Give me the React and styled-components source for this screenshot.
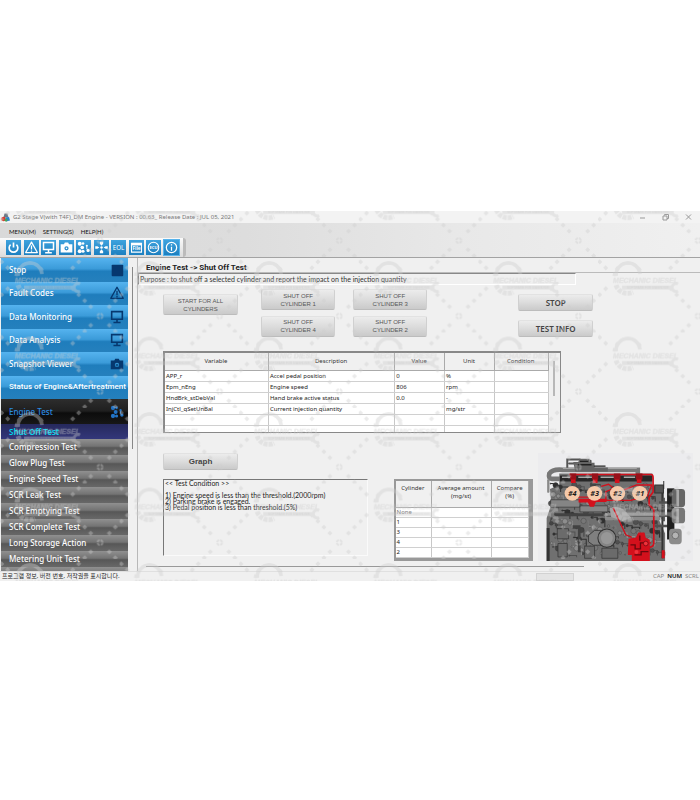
import styled, { createGlobalStyle, css } from 'styled-components';

const GlobalStyle = createGlobalStyle`
  * { box-sizing: border-box; }
  body {
    margin: 0;
    background: #fff;
    font-family: "Noto Sans", "Noto Sans CJK KR", sans-serif;
    font-size: 7px;
    color: #333;
  }
  button { font: inherit; margin: 0; cursor: pointer; }
`;

/* ---------- window ---------- */

const Page = styled.div`
  padding: 211px 0 220px;
`;

const AppWindow = styled.div`
  position: relative;
  overflow: hidden;
  background: #f0f0f0;
`;

const TitleBar = styled.header`
  display: flex;
  align-items: center;
  justify-content: space-between;
  height: 12px;
  padding: 0 8px 0 1px;
  background: #f3f3f3;
`;

const AppTitle = styled.h1`
  display: flex;
  align-items: center;
  gap: 3px;
  margin: 0;
  font-size: 6px;
  line-height: 10px;
  font-weight: 400;
  color: #777;
`;

const WindowButtons = styled.div`
  display: flex;
  gap: 16px;
`;

const WindowButton = styled.button`
  display: flex;
  width: 7px;
  height: 8px;
  padding: 0;
  border: 0;
  background: none;
  color: #999;
`;

const MenuArea = styled.div`
  height: 35px;
  padding-top: 3px;
  border-bottom: 1px solid #a3a3a3;
  background: linear-gradient(90deg, #d9d9d9, #dddddd 35%, #e8e8e8 65%, #f0f0f0);
`;

const MenuBar = styled.nav`
  display: flex;
  gap: 7px;
  height: 12px;
  padding-left: 9px;
`;

const MenuItem = styled.button`
  padding: 0;
  border: 0;
  background: none;
  font: 6px/12px Lato, sans-serif;
  color: #111;
`;

const ToolBar = styled.div`
  display: flex;
  align-items: center;
  width: 186px;
  height: 19px;
  padding: 0 3px 0 5px;
  border-right: 3px solid #bbb;
  border-radius: 0 3px 3px 0;
  background: linear-gradient(#fafafa, #dcdcdc);
`;

const ToolSlot = styled.div`
  display: flex;
  flex: 1;
  justify-content: center;
`;

const ToolButton = styled.button`
  width: 15px;
  height: 15px;
  padding: 0;
  border: 0;
  outline: ${({ $active }) => ($active ? '1px solid #58b4ec' : 'none')};
  background: linear-gradient(#3fa3de, #1c7fc0);
  color: #fff;
  svg { display: block; width: 15px; height: 15px; }
`;

const Body = styled.div`
  display: flex;
  height: 313px;
`;

/* ---------- sidebar ---------- */

const Sidebar = styled.nav`
  flex: none;
  width: 128px;
  padding-left: 1px;
  overflow: hidden;
`;

const MainMenu = styled.div`
  display: grid;
  grid-template-columns: minmax(0, 1fr);
  grid-template-rows: repeat(6, 1fr);
  height: 141px;
`;

const looks = {
  blue: css`
    background: linear-gradient(#55b3ef, #3b9bd9 45%, #1f7dbc 55%, #2580bd);
    color: #fff;
  `,
  dark: css`
    height: 25px;
    background: linear-gradient(#2d2d2d, #1f1f1f 48%, #0c0c0c 56%, #171717);
    color: #2b8be0;
    svg { color: #2273c4; }
  `,
  selected: css`
    height: 15px;
    background: linear-gradient(#26295c, #33377a);
    color: #00d7ee;
    font-weight: 600;
  `,
  grey: css`
    height: 16px;
    background: linear-gradient(#909090, #737373 45%, #575757 55%, #686868);
    color: #fff;
  `,
};

const SideButton = styled.button`
  display: flex;
  align-items: center;
  justify-content: space-between;
  width: 100%;
  padding: 0 1px 0 8px;
  border: 0;
  text-align: left;
  font-family: ${({ $narrow }) => ($narrow ? 'Roboto' : '"Noto Sans"')}, sans-serif;
  font-size: 8px;
  line-height: 12px;
  font-weight: 500;
  white-space: nowrap;
  svg { flex: none; display: block; width: 16px; height: 16px; margin-right: 2px; color: #06386f; }
  ${({ $look }) => looks[$look]}
`;

const SideScroll = styled.div`
  flex: none;
  width: 10px;
  padding: 9px 4px 0;
  border-right: 1px solid #b8b8b8;
  &::before {
    content: '';
    display: block;
    width: 1px;
    height: 182px;
    background: #888;
  }
`;

/* ---------- main panel ---------- */

const Main = styled.main`
  display: flex;
  flex: 1;
  flex-direction: column;
  min-width: 0;
`;

const PanelTitle = styled.h2`
  height: 15px;
  margin: 0;
  padding: 4px 0 0 8px;
  border-bottom: 1px solid #bbb;
  font: bold 8px/11px Roboto, sans-serif;
  color: #222;
`;

const Purpose = styled.p`
  width: 78%;
  height: 12px;
  margin: 0;
  padding-left: 1px;
  border: solid;
  border-width: 1px;
  border-color: #888 #fff #fff #888;
  font: 7px/10px Lato, sans-serif;
  white-space: nowrap;
`;

const Controls = styled.section`
  display: grid;
  grid-template-columns: 75fr 234fr 75fr;
  width: 81%;
  column-gap: 23px;
  padding: 4px 0 0 25px;
`;

const Stack = styled.div`
  display: flex;
  flex-direction: column;
  gap: 9px;
  padding-top: 5px;
`;

const CylinderButtons = styled.div`
  display: grid;
  grid-template-columns: 1fr 1fr;
  gap: 5px 18px;
  padding-right: 29%;
`;

const Button = styled.button`
  height: ${({ $tall }) => ($tall ? '21px' : '17px')};
  width: ${({ $width }) => $width || '100%'};
  padding: 0;
  border: 1px solid;
  border-color: #e2e2e2 #d0d0d0 #bcbcbc;
  border-radius: 2px;
  background: linear-gradient(#ececec, #dcdcdc 50%, #cacaca);
  font-size: ${({ $tall }) => ($tall ? '6px' : '8px')};
  line-height: ${({ $tall }) => ($tall ? '8px' : '12px')};
  font-family: ${({ $noto }) => ($noto ? '"Noto Sans"' : '"Liberation Sans"')}, sans-serif;
  font-weight: ${({ $bold }) => ($bold ? 600 : 400)};
  white-space: pre-line;
  color: ${({ $tall }) => ($tall ? '#555' : '#444')};
`;

const Content = styled.div`
  display: flex;
  flex-direction: column;
  padding: 14px 7px 0 25px;
`;

const VariableBox = styled.div`
  display: flex;
  align-items: flex-start;
  width: 75%;
  height: 82px;
  overflow: hidden;
  border: solid #888;
  border-width: 2px 1px 1px 2px;
`;

const ScrollTrack = styled.div`
  flex: none;
  width: 11px;
  padding: 8px 4px;
  &::before {
    content: '';
    display: block;
    width: 2px;
    height: 35px;
    background: #b8b8b8;
  }
`;

const Table = styled.table`
  flex: 1;
  width: 100%;
  table-layout: fixed;
  border-collapse: collapse;
  th, td {
    height: ${({ $row }) => $row};
    padding: 0 2px 0 1px;
    border-right: 1px solid #c8c8c8;
    border-bottom: 1px solid #d0d0d0;
    font-size: 6px;
    line-height: 8px;
    white-space: nowrap;
  }
  th {
    height: ${({ $head }) => $head};
    border-color: #aaa;
    background: #f0f0f0;
    font-weight: 400;
    white-space: pre-line;
    vertical-align: ${({ $top }) => ($top ? 'top' : 'middle')};
    padding-top: ${({ $top }) => ($top ? '3px' : '0')};
  }
  td { background: #fff; color: #222; }
  tbody tr:first-child td:first-child { color: ${({ $top }) => ($top ? '#777' : '#222')}; }
`;

const Lower = styled.section`
  display: grid;
  grid-template-columns: 205fr 139fr 155fr;
  column-gap: 16px;
  margin-top: 20px;
`;

const TestNotes = styled.div`
  display: flex;
  flex-direction: column;
  gap: 9px;
`;

const Notes = styled.textarea`
  width: 100%;
  height: 77px;
  padding: 0 1px;
  border: 1px solid;
  border-color: #777 #fafafa #fafafa #777;
  resize: none;
  outline: none;
  overflow: hidden;
  background: #f0f0f0;
  font: 7px/6px Lato, sans-serif;
  color: #222;
`;

const ResultBox = styled.div`
  height: 82px;
  margin: 26px -11px 0 10px;
  overflow: hidden;
  border: solid #999;
  border-width: 2px 4px 3px 2px;
`;

const EngineBox = styled.figure`
  height: 108px;
  margin: 0;
  background: #ececee;
  svg { display: block; width: 100%; height: 100%; }
`;

const BottomRule = styled.hr`
  width: 78%;
  height: 1px;
  margin: auto 0 4px 8px;
  border: 0;
  background: #999;
`;

const StatusBar = styled.footer`
  display: flex;
  align-items: center;
  height: 10px;
  padding: 0 1px 0 2px;
  border-top: 1px solid #e0e0e0;
  font-size: 6px;
  line-height: 9px;
  color: #222;
`;

const StatusText = styled.span`
  flex: 1;
`;

const StatusBox = styled.span`
  width: 38px;
  height: 8px;
  margin-right: 76px;
  border: 1px solid #d2d2d2;
  background: #e4e4e4;
`;

const LockKey = styled.span`
  margin-left: 3px;
  color: ${({ $on }) => ($on ? '#111' : '#888')};
  font-weight: ${({ $on }) => ($on ? 600 : 400)};
`;

const Overlay = styled.svg`
  position: absolute;
  inset: 0;
  width: 100%;
  height: 100%;
  pointer-events: none;
`;

/* ---------- icons ---------- */

const icons = {
  power: (
    <g fill="none" stroke="currentColor" strokeWidth="2">
      <path d="M5.5 5.5a5.2 5.2 0 1 0 7 0" /><path d="M9 3v6" />
    </g>
  ),
  warning: (
    <g fill="none" stroke="currentColor" strokeWidth="1.5" strokeLinejoin="round">
      <path d="M9 2.5 16 15H2z" /><path d="M9 6.5v5M9 12.5v1.5" />
    </g>
  ),
  monitor: (
    <g fill="none" stroke="currentColor" strokeWidth="1.8">
      <path d="M3 3h12v8.5H3z" /><path d="M9 12v3M5 15.2h8" />
    </g>
  ),
  camera: (
    <path fill="currentColor" fillRule="evenodd" d="M2 5H6l1-2h4l1 2h4v10H2zM9 7.500a2.500 2.500 0 1 0 0 5 2.500 2.500 0 0 0 0-5zm0 1.500a1 1 0 1 1 0 2 1 1 0 0 1 0-2z" />
  ),
  cylinders: (
    <g fill="currentColor">
      <circle cx="4.5" cy="4.5" r="2.4" /><circle cx="7.5" cy="9" r="2.2" /><circle cx="4.5" cy="13.5" r="2.4" />
      <circle cx="8.5" cy="4.3" r="1.5" /><circle cx="8.5" cy="13.5" r="1.8" />
      <circle cx="13" cy="7" r="1.3" /><circle cx="14.5" cy="12.5" r="1.9" />
      <path d="M12.4 8h1.2v3h-1.2z" />
    </g>
  ),
  arrows: (
    <g fill="currentColor">
      <circle cx="9" cy="9" r="1.5" />
      <path d="M7 2h4v2.5L9 7 7 4.5zM7 16h4v-2.5L9 11l-2 2.500zM1.500 7.500H4L6.500 9 4 10.500H1.500zM16.500 7.500H14L11.500 9l2.500 1.500h2.500z" />
    </g>
  ),
  eol: <text x="9" y="11.5" textAnchor="middle" fontSize="7.5" fill="currentColor">EOL</text>,
  file: (
    <g>
      <path fill="none" stroke="currentColor" strokeWidth="1.3" d="M3 4h12v10.5H3z" />
      <path fill="currentColor" d="M3 3.5h12v3H3z" />
      <text x="9" y="12.5" textAnchor="middle" fontSize="5.5" fontWeight="700" fill="currentColor">File</text>
    </g>
  ),
  ecu: (
    <g>
      <circle cx="9" cy="9" r="6.3" fill="none" stroke="currentColor" strokeWidth="1.3" />
      <text x="9" y="11" textAnchor="middle" fontSize="5" fontWeight="700" fill="currentColor">ECU</text>
    </g>
  ),
  info: (
    <g fill="none" stroke="currentColor" strokeWidth="1.5">
      <circle cx="9" cy="9" r="6.2" /><path d="M9 8v5M9 5v1.6" />
    </g>
  ),
  stop: <rect x="3" y="3" width="13" height="13" rx="1" fill="currentColor" />,
};

const Icon = ({ name }) => <svg viewBox="0 0 18 18" aria-hidden="true">{icons[name]}</svg>;

const AppLogo = () => (
  <svg width="9" height="9" viewBox="0 0 18 18" aria-hidden="true">
    <path d="M7 1h6l2 8H5z" fill="#6d7886" />
    <circle cx="5" cy="12" r="4.5" fill="#d8392c" />
    <path d="M9 9l7-1 2 7-8 2z" fill="#2682ce" />
    <circle cx="10" cy="14" r="3" fill="#4aa654" />
  </svg>
);

/* ---------- engine drawing ---------- */

const RED = '#d3101c';
const bolts = Array.from({ length: 150 }, (_, i) => ({
  x: 62 + ((i * 83) % 325),
  y: 118 + ((i * 47) % 215),
  r: 2 + (i % 4) * 2,
  fill: ['#303030', '#8d8d8d', '#505050', '#777', '#444'][i % 5],
}));

const Engine = () => (
  <svg viewBox="24 27 465 321" preserveAspectRatio="none" role="img" aria-label="Engine cylinders">
    <g fill="none" strokeLinecap="round">
      <path d="M112 76V46h38M182 50v24M118 58h60" stroke="#555" strokeWidth="6" />
      <path d="M92 104H66q-12 0-8-16 10-14 40-11h226v20" stroke="#777" strokeWidth="14" />
      <path d="M100 73h220" stroke="#a5a5a5" strokeWidth="3" />
      <path d="M55 108v34" stroke="#888" strokeWidth="7" />
    </g>
    <path d="M130 54h15l4-10h30v12h15v14h40v12h-98z" fill="#636363" />
    <path d="M140 62h45M150 52h25M192 66h35" stroke="#222" strokeWidth="4" />
    <path d="M88 88h280v34l34 10v70l-14 24 18 40v82H50V220l14-40-4-46 28-12z" fill="#707070" />
    <path d="M90 94h278v18H90z" fill="#272727" />
    <path d="M96 99h35M145 99h42M212 99h40M282 99h34" stroke="#aaa" strokeWidth="5" />
    {bolts.map((b, i) => (
      <g key={i}>
        <path d={`M${b.x} ${b.y}h${8 + (i % 3) * 7}v${5 + (i % 4) * 5}`} fill="none" stroke={b.fill} strokeWidth="3" />
        <circle cx={b.x} cy={b.y} r={b.r} fill={b.fill} stroke="#333" />
      </g>
    ))}
    <path d="M62 166h88v22H62zM150 184h84v18h-84z" fill="#858585" stroke="#333" strokeWidth="2" />
    <path d="M226 205h150l16 8v14H226z" fill="#8b8b8b" />
    <path d="M226 215h150" stroke="#4e4e4e" strokeWidth="3" />
    <path d="M240 191q22-10 44 6l20 22-26 10-34-12z" fill="#a5a5a5" />
    <path d="M64 206h160v9H72l-12 18zM128 242h24v80h-8v-70h-16z" fill="#424242" />
    <path d="M82 252h34v30H82zM84 296h28v40H84zM164 304h30v36h-30zM216 310h48v30h-48z" fill="#6b6b6b" stroke="#303030" strokeWidth="2" />
    <path d="M176 272l18-15h46v44h-50l-14-10z" fill="#7f7f7f" stroke="#222" strokeWidth="2" />
    <circle cx="231" cy="280" r="27" fill="#858585" stroke="#303030" strokeWidth="3" />
    <circle cx="231" cy="280" r="18" fill="#979797" />
    <path d="M50 250h9v98h-9zM395 140h6v200h-6z" fill="#333" />
    <path d="M375 122h26v24h-26zM402 110v24" fill="#555" stroke="#333" strokeWidth="3" />
    <path d="M388 174h34M388 214h34M374 244h46M402 160v70" stroke="#505050" strokeWidth="7" />
    <path d="M412 132h22v152h-22z" fill="#1f1f1f" />
    <rect x="426" y="134" width="40" height="54" rx="10" fill="#666" />
    <rect x="426" y="190" width="40" height="46" rx="10" fill="#777" />
    <path d="M440 136h8v50h-8zM440 192h8v42h-8z" fill="#aaa" />
    <rect x="418" y="252" width="38" height="46" rx="10" fill="#8b8b8b" />
    <circle cx="437" cy="272" r="10" fill="#b4b4b4" stroke="#555" strokeWidth="2" />
    <path d="M396 316h9v24h-9z" fill={RED} />

    <g fill="none" stroke={RED} strokeWidth="4">
      <path d="M118 91h246q6 0 6 10v42l-12 16v22l14 14v100q0 14-22 12" strokeWidth="5" />
      <path d="M130 92v24M196 92v24M262 92v24M328 92v24" strokeWidth="14" />
      <path d="M128 158h58l8 10h110l30-10M214 126l22-6 16 12-24 10v24M280 138l40-16h46l-14 34" />
      <path d="M250 190l38 80 18 8M330 294h34M148 168h70" />
    </g>
    <path d="M120 88h19v18h-19zM186 88h19v18h-19zM252 88h20v18h-20zM318 88h20v18h-20z" fill="#981019" />
    <path d="M146 163h38v-9h20v9h26v10h-32l-6 14h-12l-6-13h-28z" fill={RED} />
    <path d="M296 282l22-4 8-15h18l4 16 12 6v63h-54V330h-12z" fill={RED} />
    <path d="M302 300h14v12h16v-18h20M314 330h20v-10h22M330 272v16" fill="none" stroke="#68070d" strokeWidth="4" />
    <circle cx="348" cy="296" r="7" fill="#f0323b" stroke="#68070d" strokeWidth="2" />
    <circle cx="320" cy="321" r="6" fill="#ee313b" />

    {[['#4', 127], ['#3', 194], ['#2', 263], ['#1', 330]].map(([label, x]) => (
      <g key={label}>
        <ellipse cx={x} cy="147" rx="23" ry="22" fill="#f6c9a9" />
        <text x={x} y="155" textAnchor="middle" fontSize="22" fontWeight="700" fontStyle="italic" fill="#1b1b1b">{label}</text>
      </g>
    ))}
  </svg>
);

/* ---------- repeated mark over the window ---------- */

const dashes = [8, 14, 20, 26];
const corners = [[1, 1], [1, -1], [-1, 1], [-1, -1]];

const Watermark = () => (
  <Overlay aria-hidden="true">
    <defs>
      <pattern id="mark" width="119.6" height="75.5" patternUnits="userSpaceOnUse" patternTransform="translate(0 -29.5)">
        <g fill="none" stroke="#cdcdcd">
          <path d="M18 19a12 12 0 0 1 24-2" strokeWidth="3.5" />
          <path d="M16 19a14 14 0 0 1 27-4" strokeWidth="3" strokeDasharray="3.5 3" />
          <path d="M18 28a12 12 0 0 0 17 7" strokeWidth="5" strokeDasharray="4 1" />
          <path d="M24 30.5h50" strokeWidth="4" />
          <path d="M80 27a4 4 0 1 0 0 7" strokeWidth="3" />
          <circle cx="100" cy="59" r="2.5" strokeWidth="2" strokeDasharray="3 1" />
        </g>
        <text x="15" y="26" fontSize="7" fontStyle="italic" fontWeight="700" fontFamily="Liberation Sans, sans-serif" fill="#cdcdcd" stroke="#cdcdcd" strokeWidth="0.4">MECHANIC DIESEL</text>
        <text x="29" y="32" fontSize="3" fontFamily="Liberation Sans, sans-serif" fill="#aaa">SOFTWARE FOR DIAGNOSIS</text>
        {corners.map(([sx, sy]) =>
          dashes.map((d) => (
            <path
              key={`${sx}${sy}${d}`}
              d={`M${100 + sx * d - (sx * d > 19 ? 119.6 : 0)} ${59 + sy * d - (sy * d > 16 ? 75.5 : 0)}l${sx * 2.6} ${sy * 2.6}`}
              stroke="#cdcdcd"
              strokeWidth="3.5"
            />
          ))
        )}
      </pattern>
    </defs>
    <rect width="100%" height="100%" fill="url(#mark)" opacity="0.4" />
  </Overlay>
);

/* ---------- data ---------- */

const tools = [
  ['power', 'Power'], ['warning', 'Fault codes'], ['monitor', 'Monitoring'], ['camera', 'Snapshot'],
  ['cylinders', 'Engine test'], ['arrows', 'Actuators'], ['eol', 'EOL'], ['file', 'File'], ['ecu', 'ECU'], ['info', 'Information'],
];

const mainMenu = [
  ['Stop', 'stop'],
  ['Fault Codes', 'warning'],
  ['Data Monitoring', 'monitor'],
  ['Data Analysis', 'monitor'],
  ['Snapshot Viewer', 'camera'],
  ['Status of Engine&Aftertreatment'],
];

const tests = [
  'Compression Test', 'Glow Plug Test', 'Engine Speed Test', 'SCR Leak Test', 'SCR Emptying Test',
  'SCR Complete Test', 'Long Storage Action', 'Metering Unit Test', '',
];

const variables = [
  ['APP_r', 'Accel pedal position', '0', '%', ''],
  ['Epm_nEng', 'Engine speed', '806', 'rpm', ''],
  ['HndBrk_stDebVal', 'Hand brake active status', '0.0', '-', ''],
  ['InjCtl_qSetUnBal', 'Current injection quantity', '', 'mg/str', ''],
  ['', '', '', '', ''],
  ['', '', '', '', ''],
];

const notes = `<< Test Condition >>

1) Engine speed is less than the threshold.(2000rpm)
2) Parking brake is engaged.
3) Pedal position is less than threshold.(5%)`;

const DataTable = ({ widths, heads, rows, ...rest }) => (
  <Table {...rest}>
    <colgroup>{widths.map((w, i) => <col key={i} width={w} />)}</colgroup>
    <thead><tr>{heads.map((h) => <th key={h}>{h}</th>)}</tr></thead>
    <tbody>
      {rows.map((row, i) => <tr key={i}>{row.map((cell, j) => <td key={j}>{cell}</td>)}</tr>)}
    </tbody>
  </Table>
);

const App = () => {
  return (
    <Page>
      <GlobalStyle />
      <AppWindow>
        <TitleBar>
          <AppTitle><AppLogo />G2 Stage V(with T4F)_DM Engine - VERSION : 00.63_ Release Date : JUL 05, 2021</AppTitle>
          <WindowButtons>
            <WindowButton aria-label="Minimize"><svg viewBox="0 0 7 8"><path d="M1 5h5" stroke="currentColor" /></svg></WindowButton>
            <WindowButton aria-label="Restore"><svg viewBox="0 0 7 8" fill="none" stroke="currentColor"><path d="M1 3h4v4H1zM2.5 2.5v-1h4v4H5" /></svg></WindowButton>
            <WindowButton aria-label="Close"><svg viewBox="0 0 7 8"><path d="M1 1.5l5 5M6 1.5l-5 5" stroke="currentColor" /></svg></WindowButton>
          </WindowButtons>
        </TitleBar>

        <MenuArea>
          <MenuBar>
            {['MENU(M)', 'SETTING(S)', 'HELP(H)'].map((m) => <MenuItem key={m}>{m}</MenuItem>)}
          </MenuBar>
          <ToolBar>
            {tools.map(([name, label]) => (
              <ToolSlot key={name}>
                <ToolButton aria-label={label} $active={name === 'info'}><Icon name={name} /></ToolButton>
              </ToolSlot>
            ))}
          </ToolBar>
        </MenuArea>

        <Body>
          <Sidebar>
            <MainMenu>
              {mainMenu.map(([label, icon]) => (
                <SideButton key={label} $look="blue" $narrow={!icon}>{label}{icon && <Icon name={icon} />}</SideButton>
              ))}
            </MainMenu>
            <SideButton $look="dark">Engine Test<Icon name="cylinders" /></SideButton>
            <SideButton $look="selected">Shut Off Test</SideButton>
            {tests.map((t) => <SideButton key={t} $look="grey">{t}</SideButton>)}
          </Sidebar>
          <SideScroll />

          <Main>
            <PanelTitle>Engine Test -&gt; Shut Off Test</PanelTitle>
            <Purpose>Purpose : to shut off a selected cylinder and report the impact on the injection quantity</Purpose>
            <Controls>
              <Stack><Button $tall>{'START FOR ALL\nCYLINDERS'}</Button></Stack>
              <CylinderButtons>
                {[1, 3, 4, 2].map((n) => <Button key={n} $tall>{`SHUT OFF\nCYLINDER ${n}`}</Button>)}
              </CylinderButtons>
              <Stack>
                <Button $noto $bold>STOP</Button>
                <Button $noto $bold>TEST INFO</Button>
              </Stack>
            </Controls>

            <Content>
              <VariableBox>
                <DataTable
                  $head="17px"
                  $row="11px"
                  widths={['27%', '33%', '13%', '13%', '14%']}
                  heads={['Variable', 'Description', 'Value', 'Unit', 'Condition']}
                  rows={variables}
                />
                <ScrollTrack />
              </VariableBox>
              <Lower>
                <TestNotes>
                  <Button $width="75px" $bold>Graph</Button>
                  <Notes aria-label="Test condition" readOnly defaultValue={notes} />
                </TestNotes>
                <ResultBox>
                  <DataTable
                    $top
                    $head="26px"
                    $row="10px"
                    widths={['27%', '45%', '28%']}
                    heads={['Cylinder', 'Average amount\n(mg/st)', 'Compare\n(%)']}
                    rows={['None', '1', '3', '4', '2'].map((c) => [c, '', ''])}
                  />
                </ResultBox>
                <EngineBox><Engine /></EngineBox>
              </Lower>
            </Content>
            <BottomRule />
          </Main>
        </Body>

        <StatusBar>
          <StatusText>프로그램 정보, 버전 번호, 저작권을 표시합니다.</StatusText>
          <StatusBox />
          <LockKey>CAP</LockKey>
          <LockKey $on>NUM</LockKey>
          <LockKey>SCRL</LockKey>
        </StatusBar>
        <Watermark />
      </AppWindow>
    </Page>
  );
};

export default App;
